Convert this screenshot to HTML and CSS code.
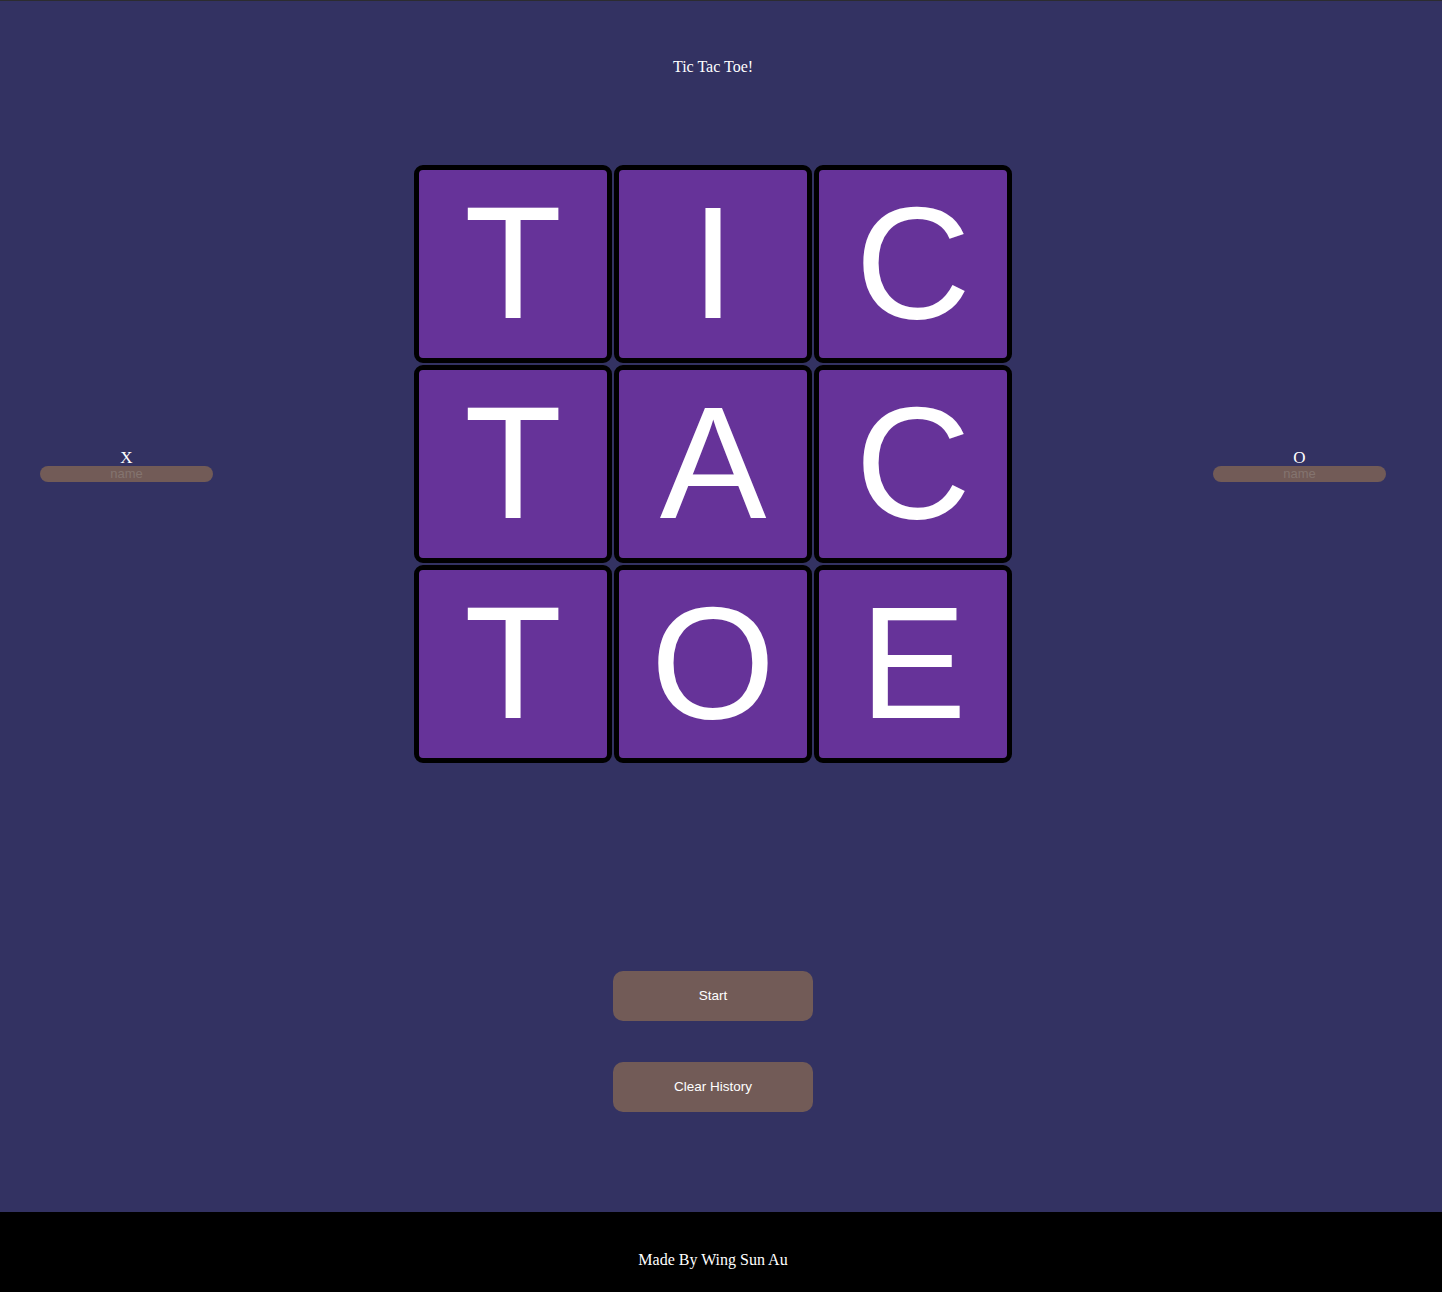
FILE: index.html
```html
<!DOCTYPE html>
<html lang="en">
<head>
<meta charset="utf-8">
<title>Tic Tac Toe!</title>
<link rel="stylesheet" href="styles.css">
</head>
<body>
<div class="page">
  <main class="main">
    <div class="title">Tic Tac Toe!</div>
    <div class="game-row">
      <div class="player">
        <div class="player-mark">X</div>
        <input class="player-name" type="text" placeholder="name">
      </div>
      <div class="board">
        <div class="cell">T</div>
        <div class="cell">I</div>
        <div class="cell">C</div>
        <div class="cell">T</div>
        <div class="cell">A</div>
        <div class="cell">C</div>
        <div class="cell">T</div>
        <div class="cell">O</div>
        <div class="cell">E</div>
      </div>
      <div class="player">
        <div class="player-mark">O</div>
        <input class="player-name" type="text" placeholder="name">
      </div>
    </div>
    <div class="controls">
      <button class="btn">Start</button>
      <button class="btn">Clear History</button>
    </div>
  </main>
  <footer class="footer">Made By Wing Sun Au</footer>
</div>
</body>
</html>
```
FILE: styles.css
```css
html, body {
  margin: 0;
  padding: 0;
}
body {
  background: #333262;
  border-top: 1px solid #2c2c30;
  font-family: "Liberation Serif", "Times New Roman", serif;
  color: #ffffff;
}
.page {
  width: 1426px;
}
.main {
  height: 1211px;
  display: flex;
  flex-direction: column;
  align-items: center;
}
.title {
  margin-top: 57px;
  font-size: 16px;
  line-height: 18px;
  text-align: center;
}
.game-row {
  margin-top: 88px;
  width: 100%;
  display: flex;
  justify-content: space-between;
  align-items: center;
}
.player {
  width: 253px;
  display: flex;
  flex-direction: column;
  align-items: center;
  margin-top: 2px;
}
.player-mark {
  font-size: 17px;
  line-height: 17px;
}
.player-name {
  width: 173px;
  height: 16px;
  box-sizing: border-box;
  border: none;
  border-radius: 8px;
  background: #725b57;
  padding: 0 6px;
  font-family: "Liberation Sans", Arial, sans-serif;
  font-size: 13px;
  text-align: center;
  color: #ffffff;
  outline: none;
}
.player-name::placeholder {
  color: #84746f;
}
.board {
  width: 600px;
  display: grid;
  grid-template-columns: repeat(3, 200px);
  grid-auto-rows: 200px;
}
.cell {
  margin: 1px;
  border: 5px solid #000000;
  border-radius: 9px;
  background: #663399;
  display: flex;
  align-items: center;
  justify-content: center;
  padding-bottom: 2px;
  font-family: "Liberation Sans", Arial, sans-serif;
  font-size: 160px;
  line-height: 1;
  color: #ffffff;
}
.controls {
  margin-top: 207px;
  display: flex;
  flex-direction: column;
  gap: 41px;
}
.btn {
  width: 200px;
  height: 50px;
  border: none;
  border-radius: 10px;
  background: #725b57;
  color: #ffffff;
  font-family: "Liberation Sans", Arial, sans-serif;
  font-size: 13.5px;
  padding: 0 0 2px 0;
}
.footer {
  height: 80px;
  box-sizing: border-box;
  padding-top: 39px;
  background: #000000;
  text-align: center;
  font-size: 16px;
  line-height: 18px;
  width: 1442px;
  padding-right: 16px;
}
```
